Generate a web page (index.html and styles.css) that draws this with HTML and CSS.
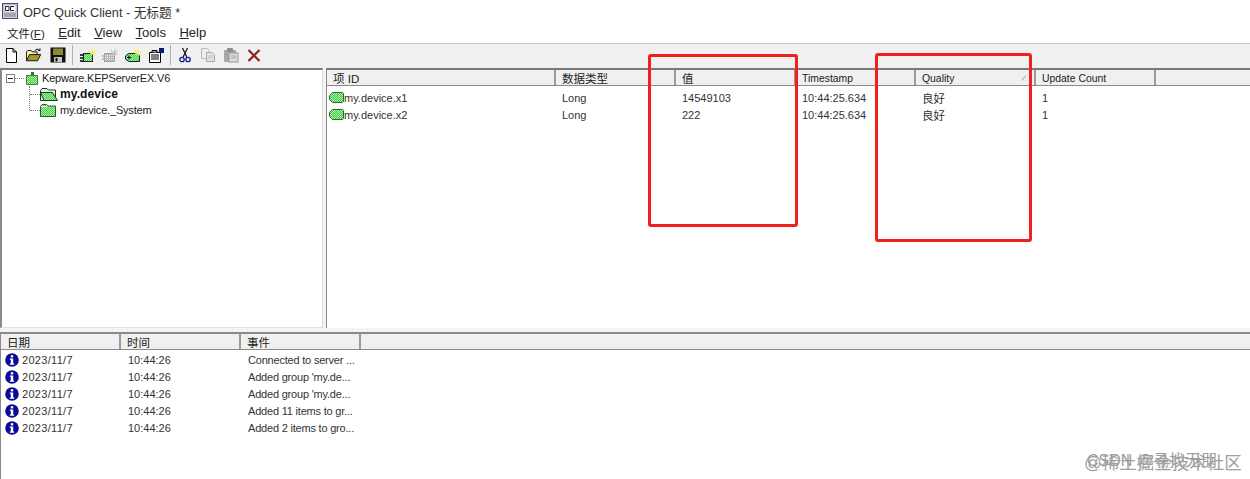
FILE: index.html
```html
<!DOCTYPE html>
<html lang="zh">
<head>
<meta charset="utf-8">
<title>OPC Quick Client</title>
<link rel="stylesheet" href="styles.css">
</head>
<body>
<svg class="defs" width="0" height="0">
  <defs>
    <pattern id="dither" width="2" height="2" patternUnits="userSpaceOnUse">
      <rect width="2" height="2" fill="#46d046"/>
      <rect width="1" height="1" fill="#a8eea8"/>
      <rect x="1" y="1" width="1" height="1" fill="#a8eea8"/>
    </pattern>
    <pattern id="grey" width="2" height="2" patternUnits="userSpaceOnUse">
      <rect width="2" height="2" fill="#b8b8b8"/>
      <rect width="1" height="1" fill="#eeeeee"/>
    </pattern>
    <symbol id="tag" viewBox="0 0 15 11">
      <path d="M3.500.5H13.500L14.500 1.500V9.500L13.500 10.500H3.500L.5 7.500V3.500Z" fill="url(#dither)" stroke="#2a6a2a"/>
    </symbol>
    <symbol id="folder" viewBox="0 0 16 14">
      <path d="M.5 3.500 2 1.500H6.500L8 3H15.500V13.500H.5Z" fill="url(#dither)" stroke="#2a5a2a"/>
      <path d="M1 3.500H7" stroke="#e4f8e4"/>
    </symbol>
    <symbol id="folder-open" viewBox="0 0 18 14">
      <path d="M.5 3.500 2 1.500H7L8.500 3H15.500V13.500H.5Z" fill="#e8f4e8" stroke="#1e3a1e"/>
      <path d="M.5 5.500H12.500L17.500 13.500H4Z" fill="url(#dither)" stroke="#1e3a1e"/>
    </symbol>
    <symbol id="info" viewBox="0 0 14 14">
      <circle cx="7" cy="7" r="6.800" fill="#0a0a96"/>
      <rect x="5.800" y="2.200" width="2.400" height="2.200" fill="#fff"/>
      <path d="M4.800 5.400H8.200V10.400H9.200V11.800H4.800V10.400H5.800V6.800H4.800Z" fill="#fff"/>
    </symbol>
  </defs>
</svg>

<div class="app">
  <header class="titlebar">
    <svg class="app-icon" viewBox="0 0 16 16">
      <rect x=".5" y=".5" width="15" height="15" fill="#d4d4e4" stroke="#4a4a7a"/>
      <rect x="2" y="2" width="12" height="7" fill="#fff" stroke="#888" stroke-width=".5"/>
      <path d="M3.500 3.500h3.500v4H3.500zM8.500 3.500H12M8.500 3.500v4H12" fill="none" stroke="#222"/>
      <path d="M2 11h12M2 13h12" stroke="#777"/>
    </svg>
    <span class="title">OPC Quick Client - 无标题 *</span>
  </header>

  <nav class="menubar">
    <span class="menu menu-cjk">文件(<u>F</u>)</span>
    <span class="menu"><u>E</u>dit</span>
    <span class="menu"><u>V</u>iew</span>
    <span class="menu"><u>T</u>ools</span>
    <span class="menu"><u>H</u>elp</span>
  </nav>

  <div class="toolbar">
    <svg class="tool" viewBox="0 0 16 16"><path d="M3.500 1.500H10L13.500 5V15.500H3.500ZM10 1.500V5H13.500" fill="#fff" stroke="#000"/></svg>
    <svg class="tool ml7" viewBox="0 0 18 16"><path d="M.5 14.500V4.500L2 3H6L7 4.500H12.500V7" fill="#f4eeb0" stroke="#000"/><path d="M.5 14.500 4 7.500H16.500L13 14.500Z" fill="#a09a30" stroke="#000"/><path d="M10 3.500C11 1 13.500 1 15.500 2.500M15.800.6V3H13.400" fill="none" stroke="#000"/></svg>
    <svg class="tool ml8" viewBox="0 0 16 16"><rect x=".5" y=".5" width="15" height="15" fill="#111"/><rect x="3" y="1.500" width="10" height="6.500" fill="#8a8a30"/><rect x="4" y="10" width="8" height="5" fill="#c8c8c0"/><rect x="5.500" y="11" width="2" height="3.500" fill="#111"/></svg>
    <span class="sep sep-a"></span>
    <svg class="tool wide" viewBox="0 0 18 16"><rect x="4.500" y="6.500" width="9" height="8" fill="url(#dither)" stroke="#123"/><path d="M1 8h3.500M1 11h3.500M1 14h3.500" stroke="#000" stroke-width="1.400"/><path d="M10 1l2 5 2-5 .5 4 3-2-2.500 3.500 2.500 1-3.500 .5-3-1.500-1-3Z" fill="#f2ee50"/></svg>
    <svg class="tool wide ml4" viewBox="0 0 18 16"><rect x="3.500" y="6.500" width="10" height="8" fill="url(#grey)" stroke="#a0a0a0"/><path d="M1 9h2.500M1 12h2.500" stroke="#aaa" stroke-width="1.400"/><path d="M10 1l2 5 2-5 .5 4 3-2-2.500 3.500 2.500 1-3.500 .5-3-1.500-1-3Z" fill="#c4c4c4"/></svg>
    <svg class="tool wide ml5" viewBox="0 0 18 16"><path d="M4.500 6.500H13.500L15.500 8.500V14.500H4.500L1.500 12V9Z" fill="url(#dither)" stroke="#123"/><path d="M3 10.500h4M5 8.500v4" stroke="#000"/><path d="M10 1l2 5 2-5 .5 4 3-2-2.500 3.500 2.500 1-3.500 .5-3-1.500-1-3Z" fill="#f2ee50"/></svg>
    <svg class="tool wide ml5" viewBox="0 0 18 16"><path d="M2.500 5.500H13.500V15.500H2.500Z" fill="#fff" stroke="#000"/><path d="M4 8h8M4 10h8M4 12h8" stroke="#000"/><path d="M5 5.500V3.500H10V5.500" fill="#999" stroke="#000"/><rect x="12" y="1" width="5" height="5" fill="#0a1a70"/><path d="M13.500 6.500V9" stroke="#000"/></svg>
    <span class="sep sep-b"></span>
    <svg class="tool narrow" viewBox="0 0 12 16"><path d="M3.500 1 7.800 10M8.500 1 4.200 10" stroke="#111" stroke-width="1.200" fill="none"/><circle cx="3" cy="12.500" r="2.200" fill="none" stroke="#1a1a9a" stroke-width="1.300"/><circle cx="9" cy="12.500" r="2.200" fill="none" stroke="#1a1a9a" stroke-width="1.300"/></svg>
    <svg class="tool ml9" viewBox="0 0 16 16"><path d="M1.500 1.500H7L9 3.500V11.500H1.500Z" fill="#eee" stroke="#bbb"/><path d="M6.500 5.500H12L14.500 8V14.500H6.500Z" fill="#e4e4e4" stroke="#aaa"/><path d="M8 9h5M8 11h5" stroke="#c4c4c4"/></svg>
    <svg class="tool ml7" viewBox="0 0 16 16"><rect x="1" y="3" width="12" height="12" rx="1" fill="#a8a8a8"/><rect x="4" y="1" width="6" height="4" rx="1" fill="#8e8e8e"/><rect x="6" y="6" width="9" height="9" fill="#dcdcdc" stroke="#9a9a9a"/><path d="M8 9h5M8 11h5" stroke="#a8a8a8"/></svg>
    <svg class="tool ml7" viewBox="0 0 16 16"><path d="M2.500 3 13.500 14M13.500 3 2.500 14" stroke="#8f1e1e" stroke-width="2.200"/></svg>
  </div>

  <main class="panes">
    <section class="tree">
      <div class="tree-root">
        <span class="expander"></span>
        <span class="dots-h"></span>
        <svg class="server" viewBox="0 0 14 13"><rect x="2.500" y="3.500" width="11" height="9" fill="url(#dither)" stroke="#3a8a3a"/><rect x="7" y="0" width="3" height="3.500" fill="#2a7a2a"/></svg>
        <span>Kepware.KEPServerEX.V6</span>
      </div>
      <div class="tree-children">
        <div class="tree-item selected">
          <span class="dots-h long"></span>
          <svg class="folder-open-ic"><use href="#folder-open"/></svg>
          <span>my.device</span>
        </div>
        <div class="tree-item">
          <span class="dots-h long"></span>
          <svg class="folder-ic"><use href="#folder"/></svg>
          <span>my.device._System</span>
        </div>
      </div>
    </section>

    <div class="splitter"></div>

    <section class="items">
      <div class="head items-grid">
        <span class="hcell">项 ID</span>
        <span class="hcell">数据类型</span>
        <span class="hcell">值</span>
        <span class="hcell latin">Timestamp</span>
        <span class="hcell latin">Quality<svg class="sort" viewBox="0 0 6 6"><path d="M.5 5.500 5 .5" stroke="#999"/><path d="M.5 5.500H5.500" stroke="#e8e8e8"/></svg></span>
        <span class="hcell latin">Update Count</span>
        <span class="hcell last"></span>
      </div>
      <div class="rows">
        <div class="row items-grid">
          <span class="cell first"><svg class="tag-ic"><use href="#tag"/></svg>my.device.x1</span>
          <span class="cell">Long</span>
          <span class="cell">14549103</span>
          <span class="cell">10:44:25.634</span>
          <span class="cell cjk">良好</span>
          <span class="cell">1</span>
        </div>
        <div class="row items-grid">
          <span class="cell first"><svg class="tag-ic"><use href="#tag"/></svg>my.device.x2</span>
          <span class="cell">Long</span>
          <span class="cell">222</span>
          <span class="cell">10:44:25.634</span>
          <span class="cell cjk">良好</span>
          <span class="cell">1</span>
        </div>
      </div>
    </section>
  </main>

  <section class="log">
    <div class="head log-grid">
      <span class="hcell">日期</span>
      <span class="hcell">时间</span>
      <span class="hcell">事件</span>
      <span class="hcell last"></span>
    </div>
    <div class="log-rows">
      <div class="log-row log-grid"><span class="cell first"><svg class="info-ic"><use href="#info"/></svg>2023/11/7</span><span class="cell">10:44:26</span><span class="cell event">Connected to server ...</span></div>
      <div class="log-row log-grid"><span class="cell first"><svg class="info-ic"><use href="#info"/></svg>2023/11/7</span><span class="cell">10:44:26</span><span class="cell event">Added group 'my.de...</span></div>
      <div class="log-row log-grid"><span class="cell first"><svg class="info-ic"><use href="#info"/></svg>2023/11/7</span><span class="cell">10:44:26</span><span class="cell event">Added group 'my.de...</span></div>
      <div class="log-row log-grid"><span class="cell first"><svg class="info-ic"><use href="#info"/></svg>2023/11/7</span><span class="cell">10:44:26</span><span class="cell event">Added 11 items to gr...</span></div>
      <div class="log-row log-grid"><span class="cell first"><svg class="info-ic"><use href="#info"/></svg>2023/11/7</span><span class="cell">10:44:26</span><span class="cell event">Added 2 items to gro...</span></div>
    </div>
  </section>
</div>

<div class="mark mark-value"></div>
<div class="mark mark-quality"></div>
<div class="watermark"><span class="wm-a">CSDN @寻找无朋</span><span class="wm-b">@稀土掘金技术社区</span></div>
</body>
</html>
```
FILE: styles.css
```css
* { box-sizing: border-box; }
html, body { margin: 0; height: 100%; overflow: hidden; background: #fff; }
body {
  font-family: "Liberation Sans", "Noto Sans CJK SC", sans-serif;
  font-size: 11px;
  color: #222;
  position: relative;
}
.defs { position: absolute; }
.app { display: flex; flex-direction: column; height: 479px; }

.titlebar { height: 22px; display: flex; align-items: center; padding-left: 2px; gap: 5px; background: #fff; }
.app-icon { width: 16px; height: 16px; }
.title { font-size: 12.7px; color: #333; }

.menubar { height: 21px; display: flex; align-items: center; padding-left: 7px; gap: 13.500px; background: #fff; font-size: 13px; color: #222; }
.menu u { text-underline-offset: 1px; }
.menu-cjk { font-size: 11.500px; }

.toolbar {
  height: 25px;
  display: flex;
  align-items: center;
  padding: 0 0 2px 3px;
  background: #f0f0f0;
  border-top: 1px solid #c4c4c4;
}
.tool { width: 16px; height: 16px; flex: none; }
.tool.wide { width: 18px; }
.tool.narrow { width: 12px; }
.ml4 { margin-left: 4px; }
.ml5 { margin-left: 5px; }
.ml7 { margin-left: 7px; }
.ml8 { margin-left: 8px; }
.ml9 { margin-left: 9px; }
.sep { width: 1px; height: 20px; background: #b0b0b0; flex: none; }
.sep-a { margin: 0 6px 0 6px; }
.sep-b { margin: 0 8px 0 5px; }

.panes { height: 264px; display: flex; background: #f4f4f4; padding-bottom: 4px; }
.tree {
  width: 323px;
  flex: none;
  background: #fff;
  border: 2px solid #8a8a8a;
  border-right: 1px solid #d8d8d8;
  border-bottom: 1px solid #e0e0e0;
  border-top-color: #7a7a7a;
  padding: 0 0 0 4px;
  letter-spacing: -.18px;
}
.tree-root { display: flex; align-items: center; height: 16px; }
.expander { width: 9px; height: 9px; border: 1px solid #808080; flex: none; background: #fff; }
.expander::after { content: ""; display: block; height: 1px; width: 5px; margin: 3px 1px; background: #222; }
.dots-h { width: 9px; height: 1px; border-top: 1px dotted #808080; flex: none; }
.server { width: 14px; height: 13px; flex: none; margin-right: 4px; }
.tree-children { margin-left: 23px; border-left: 1px dotted #808080; height: 24px; }
.tree-item { display: flex; align-items: center; height: 16px; }
.tree-item .dots-h.long { width: 10px; }
.folder-ic { width: 16px; height: 14px; margin-right: 4px; flex: none; }
.folder-open-ic { width: 18px; height: 14px; margin-right: 2px; flex: none; }
.tree-item.selected { font-weight: bold; color: #111; font-size: 12px; letter-spacing: .1px; }

.splitter { width: 3px; flex: none; background: #f4f4f4; }

.items {
  flex: 1;
  background: #fff;
  border-top: 2px solid #7a7a7a;
  border-left: 1px solid #8a8a8a;
}
.head { height: 16px; background: #f0f0f0; border-bottom: 1px solid #8a8a8a; display: grid; }
.hcell {
  display: flex;
  align-items: center;
  padding-left: 6px;
  border-right: 2px solid #9a9a9a;
  font-size: 11.5px;
  color: #222;
  position: relative;
  white-space: nowrap;
  overflow: hidden;
}
.hcell.latin { font-size: 10.4px; padding-top: 2px; }
.hcell.last { border-right: 0; }
.sort { position: absolute; right: 7px; top: 5px; width: 6px; height: 6px; }

.items-grid { display: grid; grid-template-columns: 229px 120px 120px 120px 120px 120px 1fr; }
.rows { padding-top: 3px; }
.row { height: 17px; align-items: center; }
.cell { padding-left: 6px; white-space: nowrap; font-size: 11px; color: #333; }
.cell.cjk { font-size: 11.5px; }
.cell.first { display: flex; align-items: center; padding-left: 2px; }
.tag-ic { width: 15px; height: 11px; flex: none; }

.log { flex: 1; border-top: 2px solid #8a8a8a; border-left: 1px solid #8a8a8a; background: #fff; }
.log-grid { display: grid; grid-template-columns: 120px 120px 120px 1fr; }
.log-rows { padding-top: 1px; }
.log-row { height: 17px; align-items: center; }
.log-row .cell { padding-left: 7px; }
.log-row .cell.first { padding-left: 4px; letter-spacing: .3px; }
.log-row .cell.event { letter-spacing: -.2px; }
.info-ic { width: 14px; height: 14px; flex: none; margin-right: 3px; }

.mark { position: absolute; border: 3px solid #f0211c; border-radius: 3px; }
.mark-value { left: 648px; top: 54px; width: 150px; height: 173px; }
.mark-quality { left: 875px; top: 53px; width: 157px; height: 189px; }

.watermark { position: absolute; left: 1084px; top: 451px; width: 160px; height: 22px; color: #a0a0a0; font-size: 17.500px; line-height: 22px; }
.wm-a, .wm-b { position: absolute; left: 0; white-space: nowrap; }
.wm-a { top: -1px; left: 3px; font-size: 16px; color: #9c9c9c; }
.wm-b { top: 1px; }
```
